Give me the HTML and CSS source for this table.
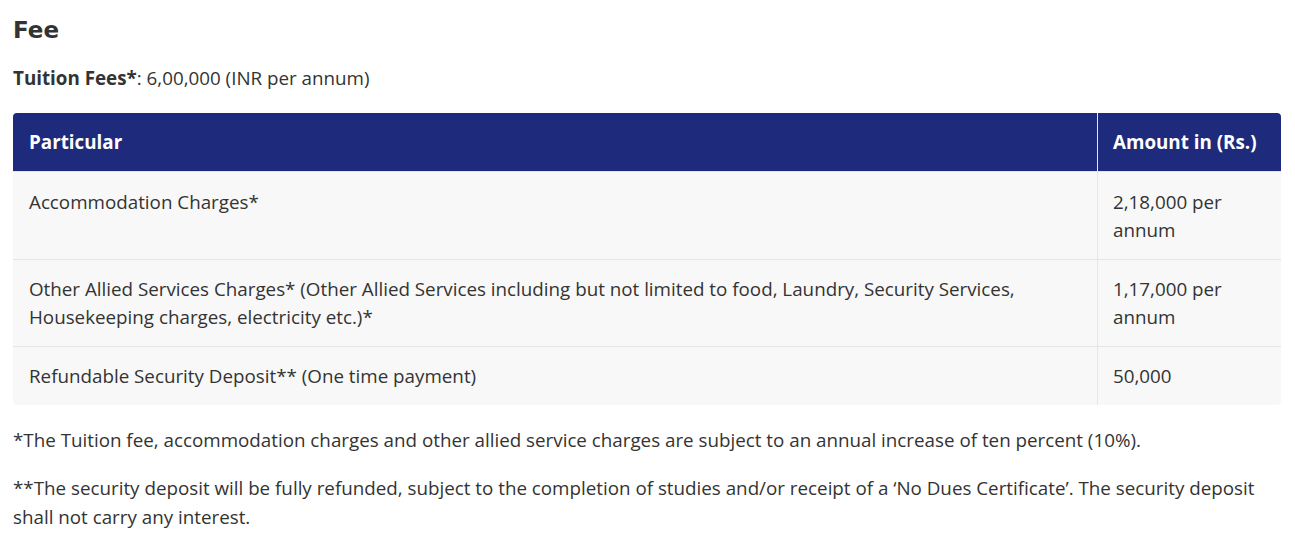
FILE: index.html
```html
<!DOCTYPE html>
<html>
<head>
<meta charset="utf-8">
<link rel="stylesheet" href="styles.css">
</head>
<body>
<div class="page">
  <h2 class="title">Fee</h2>
  <p class="line"><strong>Tuition Fees*</strong>: 6,00,000 (INR per annum)</p>
  <table class="fees">
    <thead>
      <tr><th class="c1">Particular</th><th class="c2">Amount in (Rs.)</th></tr>
    </thead>
    <tbody>
      <tr><td class="c1">Accommodation Charges*</td><td class="c2">2,18,000 per annum</td></tr>
      <tr><td class="c1">Other Allied Services Charges* (Other Allied Services including but not limited to food, Laundry, Security Services, Housekeeping charges, electricity etc.)*</td><td class="c2">1,17,000 per annum</td></tr>
      <tr><td class="c1">Refundable Security Deposit** (One time payment)</td><td class="c2">50,000</td></tr>
    </tbody>
  </table>
  <p class="note">*The Tuition fee, accommodation charges and other allied service charges are subject to an annual increase of ten percent (10%).</p>
  <p class="note">**The security deposit will be fully refunded, subject to the completion of studies and/or receipt of a ‘No Dues Certificate’. The security deposit shall not carry any interest.</p>
</div>
</body>
</html>
```
FILE: styles.css
```css
html, body { margin: 0; padding: 0; background: #fff; }
body { font-family: "Open Sans", "Noto Sans", sans-serif; color: #333; font-size: 18.8px; line-height: 29px; }
.page { padding: 13px 14px 0 13px; }
.title { margin: 0 0 17px; font-size: 23px; line-height: 34px; font-weight: 700; color: #333; font-family: "DejaVu Sans", sans-serif; }
.line { margin: 0 0 20px; }
.line strong { font-weight: 700; }
.fees { width: 100%; border-collapse: separate; border-spacing: 0; margin-bottom: 21px; }
.fees th { background: #1e2a7c; color: #fff; text-align: left; font-weight: 700; padding: 15px 15px; line-height: 28px; }
.fees th.c1 { border-top-left-radius: 4px; border-right: 1px solid #e4e6ee; padding-left: 16px; }
.fees th.c2 { border-top-right-radius: 4px; width: 153px; }
.fees td { background: #f8f8f8; padding: 15px 15px; line-height: 28px; vertical-align: top; border-top: 1px solid #e4e4ea; }
.fees td.c1 { border-right: 1px solid #e4e6ee; padding-left: 16px; }
.fees tbody tr:first-child td { padding-top: 16px; }
.fees tbody tr:last-child td.c1 { border-bottom-left-radius: 4px; }
.fees tbody tr:last-child td.c2 { border-bottom-right-radius: 4px; }
.note { margin: 0 0 19px; }
```
